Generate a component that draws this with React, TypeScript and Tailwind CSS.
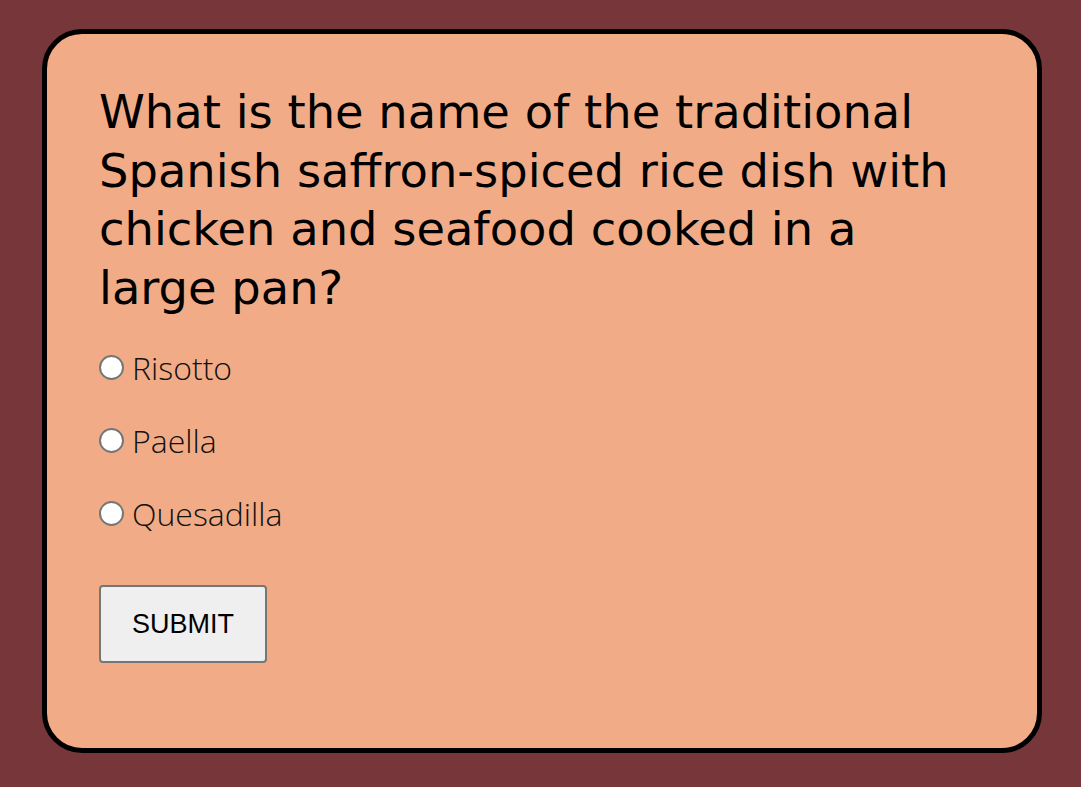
import { useState } from "react";

const OPTIONS = ["Risotto", "Paella", "Quesadilla"];

export default function App() {
  const [pick, setPick] = useState<string | null>(null);

  return (
    <div className="min-h-screen bg-[#76363a] pt-[29px] pl-[42px] pb-[36px]">
      <div className="w-[1000px] rounded-[40px] border-[5px] border-black bg-[#f1ac87] px-[52px] pt-[49px] pb-[85px]">
        {/* Question */}
        <h1 className="w-[870px] text-[46.4px] leading-[58.5px] font-normal text-black font-['DejaVu_Sans',sans-serif]">
          What is the name of the traditional Spanish saffron-spiced rice dish with chicken and seafood cooked in a large pan?
        </h1>

        {/* Answers */}
        <div className="mt-[29px] flex flex-col gap-[30px]">
          {OPTIONS.map((o) => (
            <label key={o} className="flex items-center gap-[8px] h-[43px] cursor-pointer">
              <input
                type="radio"
                name="answer"
                checked={pick === o}
                onChange={() => setPick(o)}
                className="appearance-none shrink-0 w-[25px] h-[25px] m-0 rounded-full border-2 border-[#767676] bg-white checked:border-[7px] checked:border-[#0075ff] cursor-pointer"
              />
              <span className="text-[32px] font-light text-[#111] font-['Open_Sans',sans-serif]">{o}</span>
            </label>
          ))}
        </div>

        <button
          type="button"
          className="mt-[50px] w-[168px] h-[78px] rounded-[4px] border-2 border-[#767676] bg-[#efefef] text-[27px] text-black font-['Liberation_Sans',Arial,sans-serif]"
        >
          SUBMIT
        </button>
      </div>
    </div>
  );
}
